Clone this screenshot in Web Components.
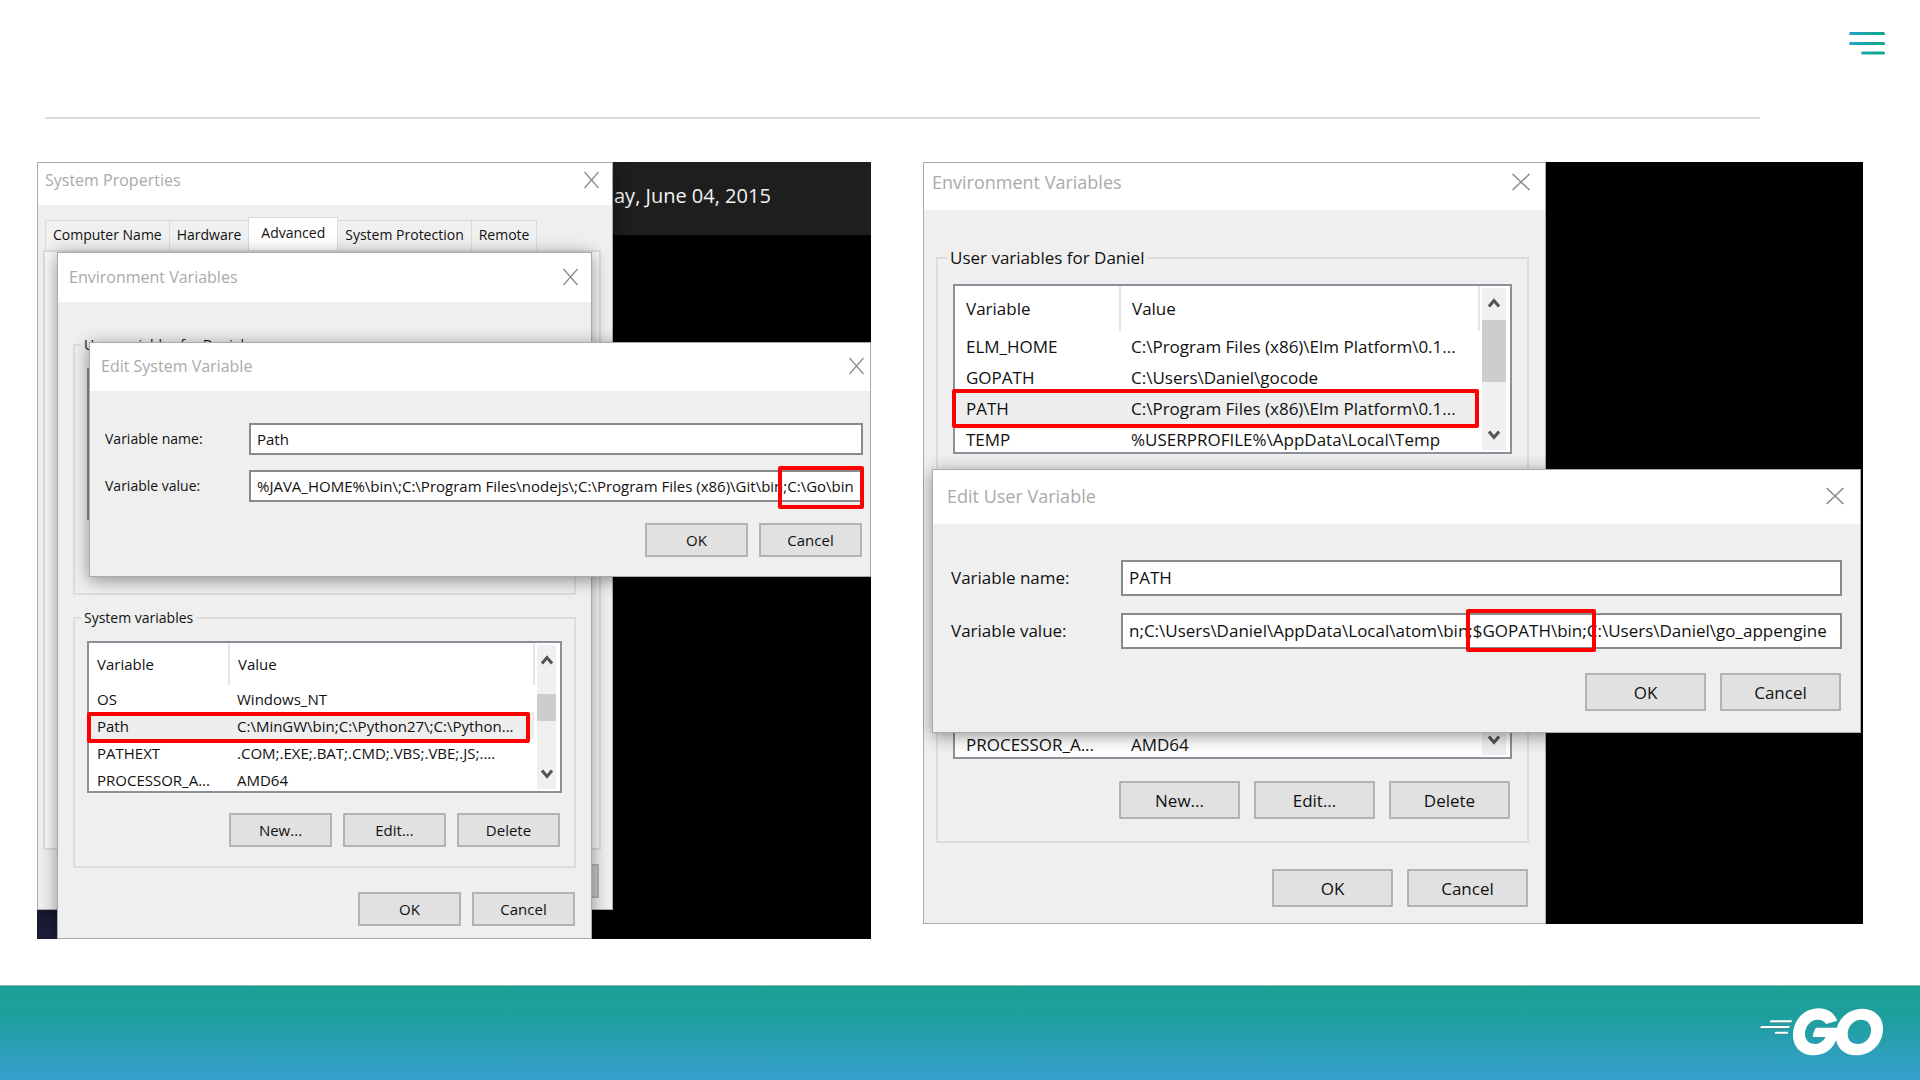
<!DOCTYPE html>
<html lang="en">
<head>
<meta charset="utf-8">
<title>Go environment variables</title>
<style>
html, body { margin: 0; height: 100%; }
body { background: #fff; font-family: "Open Sans", "Noto Sans", sans-serif; color: #111; }
</style>
</head>
<body>
<slide-page>
  <desk-shot slot="shots" class="system">
    <win-dialog class="props" heading="System Properties">
      <tab-strip labels="Computer Name|Hardware|Advanced|System Protection|Remote" active="Advanced"></tab-strip>
      <win-actions><win-button label="Apply" blank></win-button></win-actions>
    </win-dialog>
    <win-dialog class="env" heading="Environment Variables">
      <win-group legend="User variables for Daniel"><win-list></win-list></win-group>
      <win-group legend="System variables">
        <win-list head="Variable|Value" rows="OS|Windows_NT~Path|C:\MinGW\bin;C:\Python27\;C:\Python...~PATHEXT|.COM;.EXE;.BAT;.CMD;.VBS;.VBE;.JS;....~PROCESSOR_A...|AMD64" selected="Path"></win-list>
        <win-actions slot="actions"><win-button label="New..."></win-button><win-button label="Edit..."></win-button><win-button label="Delete"></win-button></win-actions>
      </win-group>
      <win-actions class="close-row"><win-button label="OK"></win-button><win-button label="Cancel"></win-button></win-actions>
    </win-dialog>
    <win-dialog class="edit" heading="Edit System Variable">
      <win-field label="Variable name:" value="Path"></win-field>
      <win-field label="Variable value:" value="%JAVA_HOME%\bin\;C:\Program Files\nodejs\;C:\Program Files (x86)\Git\bin;C:\Go\bin"></win-field>
      <win-actions><win-button label="OK"></win-button><win-button label="Cancel"></win-button></win-actions>
    </win-dialog>
    <red-frame class="row-frame"></red-frame>
    <red-frame class="value-frame"></red-frame>
  </desk-shot>
  <desk-shot slot="shots" class="user">
    <win-dialog class="env" heading="Environment Variables">
      <win-group legend="User variables for Daniel">
        <win-list head="Variable|Value" rows="ELM_HOME|C:\Program Files (x86)\Elm Platform\0.1...~GOPATH|C:\Users\Daniel\gocode~PATH|C:\Program Files (x86)\Elm Platform\0.1...~TEMP|%USERPROFILE%\AppData\Local\Temp" selected="PATH"></win-list>
      </win-group>
      <win-group>
        <win-list rows="PROCESSOR_A...|AMD64"></win-list>
        <win-actions slot="actions"><win-button label="New..."></win-button><win-button label="Edit..."></win-button><win-button label="Delete"></win-button></win-actions>
      </win-group>
      <win-actions class="close-row"><win-button label="OK"></win-button><win-button label="Cancel"></win-button></win-actions>
    </win-dialog>
    <win-dialog class="edit" heading="Edit User Variable">
      <win-field label="Variable name:" value="PATH"></win-field>
      <win-field label="Variable value:" value="n;C:\Users\Daniel\AppData\Local\atom\bin;$GOPATH\bin;C:\Users\Daniel\go_appengine"></win-field>
      <win-actions><win-button label="OK"></win-button><win-button label="Cancel"></win-button></win-actions>
    </win-dialog>
    <red-frame class="row-frame"></red-frame>
    <red-frame class="value-frame"></red-frame>
  </desk-shot>
</slide-page>

<script>
class Base extends HTMLElement {
  connectedCallback() {
    if (this.shadowRoot) return;
    this.attachShadow({ mode: 'open' }).innerHTML = '<style>*{box-sizing:border-box}' + this.css() + '</style>' + this.html();
  }
  attr(n) { return this.getAttribute(n) || ''; }
}

customElements.define('slide-page', class extends Base {
  css() { return `
    :host { display: flex; flex-direction: column; min-height: 100vh; }
    header { display: flex; flex-direction: column; padding: 30px 35px 0 45px; height: 119px; }
    .menu { align-self: flex-end; width: 36px; height: 27px; padding: 0; border: 0; background: none; }
    .menu svg { display: block; }
    hr { margin: auto 125px 0 0; border: 0; height: 2px; background: #d9d9d9; }
    main { flex: 1; display: grid; grid-template-columns: 834fr 940fr; column-gap: 52px; align-items: start; padding: 43px 57px 46px 37px; }
    footer { display: flex; justify-content: flex-end; align-items: flex-start; height: 95px; padding: 22px 37px 0 0; border-top: 1px solid #8fb3b0; background: linear-gradient(#1ba196, #1d9f9c 32%, #379fcf); }`; }
  html() { return `
    <header>
      <button class="menu" aria-label="Menu"><svg width="36" height="27" viewBox="0 0 36 27" fill="none" stroke="url(#g)" stroke-width="3" stroke-linecap="round">
        <defs><linearGradient id="g" gradientUnits="userSpaceOnUse" x1="0" y1="0" x2="36" y2="0"><stop stop-color="#2aa3d2"/><stop offset=".7" stop-color="#10a695"/></linearGradient></defs>
        <path d="M1.5 3.5H34.5M1.5 13.5H34.5M13.5 23H34.5"/></svg></button>
      <hr>
    </header>
    <main><slot name="shots"></slot></main>
    <footer><svg width="123" height="48" viewBox="120 84 369 144" role="img" aria-label="Go">
      <g fill="#4b8f90" transform="translate(1 3)"><path d="M152 121H216L214 127H149zM124 138H209L207 144H120zM166 155H204V161H164z"/></g>
      <g fill="#fff"><path d="M152 121H216L214 127H149zM124 138H209L207 144H120zM166 155H204V161H164z"/>
      <path d="M352 122C342 98 322 85 297 85C252 85 219 120 219 165C219 202 245 226 280 226C312 226 336 210 347 183L356 160L352 143H288Q281 152 278 171H317C310 184 298 192 285 192C267 192 255 180 255 162C255 138 272 119 294 119C306 119 314 124 318 132Z"/>
      <path fill-rule="evenodd" d="M489 146C489 190 455 226 408 226C372 226 347 202 347 168C347 122 382 86 427 86C463 86 489 110 489 146ZM453 150C453 130 440 119 424 119C401 119 383 138 383 162C383 181 395 192 412 192C436 192 453 174 453 150Z"/></g>
    </svg></footer>`; }
});

/* A cropped desktop: the windows lie freely on it. */
customElements.define('desk-shot', class extends Base {
  css() { return `
    :host { display: block; position: relative; overflow: hidden; background: #000; }
    :host(.system) { height: 777px; --fs: 15px; --label-fs: 14px; --title-fs: 16px; --btn-w: 103px; --btn-h: 34px; --btn-gap: 11px; --row: 27px; --head: 42px;
      --col: 140px; --list-h: 152px; --cell: 8px; --bar-w: 25px; --thumb-top: 49px; --thumb-h: 27px; --x: 15px; --lh: 20px; --gin: 12px; --gpad: 13px; --gh: 260px; --ggap: 13px;
      --agap: 20px; --label-w: 144px; --in-h: 32px; --in-gap: 15px; }
    :host(.user) { height: 762px; --fs: 17px; --label-fs: 17px; --title-fs: 18px; --btn-w: 121px; --btn-h: 38px; --btn-gap: 14px; --row: 31px; --head: 45px;
      --col: 165px; --list-h: 170px; --cell: 11px; --bar-w: 30px; --thumb-top: 32px; --thumb-h: 62px; --x: 18px; --lh: 24px; --gin: 15px; --gpad: 14px; --gh: 292px; --ggap: 13px;
      --agap: 22px; --label-w: 170px; --in-h: 36px; --in-gap: 17px; }
    ::slotted(*) { position: absolute; }
    .band { display: none; }
    :host(.system) .band { display: flex; align-items: center; height: 73px; padding: 0 0 6px 577px; background: #1e1e1e; color: #f2f2f2; font-size: 20px; }
    :host(.system) .corner { position: absolute; left: 0; bottom: 0; width: 20px; height: 30px; background: #1c1e38; }
    :host(.system) ::slotted(.props) { left: 0; top: 0; width: 576px; height: 748px; --bar: 42px; --bar-pad: 0 13px 8px 7px; --body: 12px 11px 0 5px; }
    :host(.system) ::slotted(.env) { left: 20px; top: 90px; width: 535px; height: 687px; --bar: 49px; --bar-pad: 0 13px 2px 11px; --body: 33px 15px 0 15px; }
    :host(.system) ::slotted(.edit) { left: 52px; top: 180px; right: 0; height: 235px; --bar: 48px; --bar-pad: 0 6px 2px 11px; --body: 32px 6px 0 15px; --foot: 6px; }
    :host(.system) ::slotted(.row-frame) { left: 50px; top: 550px; width: 443px; height: 31px; }
    :host(.system) ::slotted(.value-frame) { right: 7px; top: 304px; width: 86px; height: 43px; }
    :host(.user) ::slotted(.env) { left: 0; top: 0; width: 623px; height: 762px; --bar: 47px; --bar-pad: 0 15px 10px 8px; --body: 36px 16px 0 12px; }
    :host(.user) ::slotted(.edit) { left: 9px; top: 307px; right: 2px; height: 264px; --bar: 54px; --bar-pad: 0 16px 2px 14px; --body: 36px 17px 0 18px; --foot: 7px; }
    :host(.user) ::slotted(.row-frame) { left: 29px; top: 227px; width: 527px; height: 39px; }
    :host(.user) ::slotted(.value-frame) { right: 267px; top: 447px; width: 130px; height: 43px; }`; }
  html() { return `<div class="band">${this.classList.contains('system') ? 'ay, June 04, 2015' : ''}</div><div class="corner"></div><slot></slot>`; }
});

customElements.define('win-dialog', class extends Base {
  css() { return `
    :host { display: flex; flex-direction: column; box-sizing: border-box; border: 1px solid #aaa; background: #efefef; box-shadow: 0 3px 16px rgba(0,0,0,.42); }
    header { display: flex; align-items: center; justify-content: space-between; flex: none; height: var(--bar); padding: var(--bar-pad); background: #fff; }
    h2 { margin: 0; font-size: var(--title-fs); font-weight: 400; line-height: 24px; color: #aaa; }
    button { width: var(--x); height: 18px; padding: 0; border: 0; background: none; }
    svg { display: block; width: 100%; height: 100%; }
    section { display: flex; flex-direction: column; padding: var(--body); }`; }
  html() { return `<header><h2>${this.attr('heading')}</h2><button aria-label="Close"><svg viewBox="0 0 16 18" preserveAspectRatio="none" fill="none" stroke="#8c8c8c" stroke-width="1.4"><path d="M.5 1L15.5 17M15.5 1L.5 17"/></svg></button></header><section><slot></slot></section>`; }
});

customElements.define('tab-strip', class extends Base {
  css() { return `
    :host { display: block; margin-bottom: 14px; }
    .tabs { display: flex; align-items: flex-end; height: 33px; padding-left: 3px; }
    button { height: 30px; padding: 0 7px 2px; border: 1px solid #d9d9d9; border-bottom: 0; margin-left: -1px; background: #f0f0f0; font: 14px "Open Sans", sans-serif; color: #111; }
    button[aria-selected=true] { height: 33px; padding: 0 12px 4px; background: #fff; }
    .page { height: 600px; border: 2px solid #dcdcdc; background: #f9f9f9; }`; }
  html() { return `<div class="tabs" role="tablist">${this.attr('labels').split('|').map(l => `<button role="tab" aria-selected="${l === this.attr('active')}">${l}</button>`).join('')}</div><div class="page"></div>`; }
});

customElements.define('win-button', class extends Base {
  css() { return `
    :host { display: block; }
    button { display: block; width: var(--btn-w); height: var(--btn-h); padding: 0; border: 2px solid #b3b3b3; background: #e1e1e1; font: var(--fs) "Open Sans", sans-serif; color: #111; }
    :host([blank]) button { background: #c9c9c9; }`; }
  html() { const l = this.attr('label'); return this.hasAttribute('blank') ? `<button aria-label="${l}"></button>` : `<button>${l}</button>`; }
});

customElements.define('win-actions', class extends Base {
  css() { return `
    :host { display: flex; justify-content: flex-end; gap: var(--btn-gap); padding-right: 2px; }
    :host(.close-row) { margin-top: calc(var(--agap) + 4px); padding-right: 1px; }`; }
  html() { return '<slot></slot>'; }
});

customElements.define('win-group', class extends Base {
  css() { return `
    :host { display: block; margin-bottom: var(--ggap); }
    :host(:nth-of-type(2)) { margin-bottom: 0; }
    fieldset { min-width: 0; margin: 0; height: var(--gh); padding: var(--gpad) var(--gin) 0; border: 2px solid #dcdcdc; }
    legend { margin-left: -6px; padding: 0 3px; min-height: var(--lh); font-size: var(--label-fs); line-height: var(--lh); }
    .acts { display: block; margin-top: var(--agap); }`; }
  html() { return `<fieldset><legend>${this.attr('legend')}</legend><slot></slot><div class="acts"><slot name="actions"></slot></div></fieldset>`; }
});

customElements.define('win-list', class extends Base {
  css() { return `
    :host { display: flex; justify-content: space-between; box-sizing: border-box; height: var(--list-h); border: 2px solid #8b9099; background: #fff; overflow: hidden; }
    .data { flex: 1; min-width: 0; overflow: hidden; }
    .data.tail { display: flex; flex-direction: column; justify-content: flex-end; }
    table { width: 100%; border-collapse: collapse; table-layout: fixed; font-size: var(--fs); line-height: 20px; }
    th, td { padding: 0 0 0 var(--cell); font-weight: 400; text-align: left; white-space: nowrap; overflow: hidden; }
    th { height: var(--head); border-right: 2px solid #e5e5e5; }
    td { height: var(--row); }
    .tail td { height: 25px; }
    .name { width: var(--col); }
    .sel td { background: #eee; }
    .scroll { display: flex; flex-direction: column; align-items: center; justify-content: space-between; position: relative; width: var(--bar-w); border: solid #fff; border-width: 2px 4px 2px 2px; background: #f0f0f0; padding: 9px 0; }
    .thumb { position: absolute; left: 0; right: 0; top: var(--thumb-top); height: var(--thumb-h); background: #cdcdcd; }
    svg { display: block; }`; }
  html() {
    const rows = this.attr('rows') ? this.attr('rows').split('~').map(r => r.split('|')) : [];
    const head = this.attr('head') ? this.attr('head').split('|') : null;
    const arrow = d => `<svg width="12" height="12" viewBox="0 0 12 12" fill="none" stroke="#555" stroke-width="3"><path d="${d}"/></svg>`;
    const cols = '<colgroup><col class="name"><col></colgroup>';
    return `<div class="data${head ? '' : ' tail'}"><table>${cols}${head ? `<thead><tr>${head.map(h => `<th>${h}</th>`).join('')}</tr></thead>` : ''}<tbody>${rows.map(r => `<tr class="${r[0] === this.attr('selected') ? 'sel' : ''}">${r.map(c => `<td>${c}</td>`).join('')}</tr>`).join('')}</tbody></table></div><div class="scroll">${arrow('M1 9.5L6 3.5L11 9.5')}${head ? '<div class="thumb"></div>' : ''}${arrow('M1 2.5L6 8.5L11 2.5')}</div>`;
  }
});

customElements.define('win-field', class extends Base {
  css() { return `
    :host { display: flex; margin-bottom: var(--in-gap); margin-right: 1px; }
    :host(:nth-of-type(2)) { margin-bottom: calc(var(--foot) + var(--in-gap)); }
    label { flex: none; width: var(--label-w); font-size: var(--label-fs); line-height: var(--in-h); }
    input { flex: 1; min-width: 0; height: var(--in-h); padding: 0 6px 1px; border: 2px solid #8a8a8a; border-radius: 0; background: #fff; font: var(--fs) "Open Sans", sans-serif; color: #111; }`; }
  html() { return `<label for="f">${this.attr('label')}</label><input id="f" type="text" value="${this.attr('value')}">`; }
});

customElements.define('red-frame', class extends Base {
  css() { return `:host { display: block; box-sizing: border-box; border: 4px solid #fe0000; border-radius: 2px; pointer-events: none; }`; }
  html() { return ''; }
});
</script>
</body>
</html>
